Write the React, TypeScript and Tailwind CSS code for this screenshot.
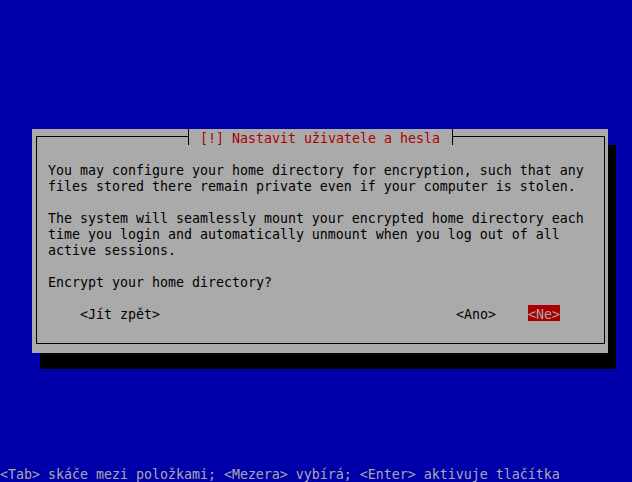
export default function App() {
  const lines = [
    "You may configure your home directory for encryption, such that any",
    "files stored there remain private even if your computer is stolen.",
    "",
    "The system will seamlessly mount your encrypted home directory each",
    "time you login and automatically unmount when you log out of all",
    "active sessions.",
    "",
    "Encrypt your home directory?",
    "",
  ];

  return (
    <div className="flex h-[482px] w-[632px] flex-col bg-[#0000aa] font-['DejaVu_Sans_Mono',monospace] text-[13.29px] leading-[19px]">
      {/* dialog */}
      <div className="relative ml-[32px] mt-[129px] flex h-[224px] w-[576px] flex-col bg-[#aaaaaa] pb-[9px] pl-[4px] pr-[3px] pt-[7px] shadow-[8px_16px_0_0_#000]">
        <div className="flex flex-1 flex-col border border-black pl-[11px] pt-[24px] text-black">
          {lines.map((l, i) => (
            <div key={i} className="h-4 whitespace-pre">
              {l}
            </div>
          ))}
          <div className="flex h-4 flex-row whitespace-pre">
            <span className="ml-[32px] h-4">&lt;Jít zpět&gt;</span>
            <span className="ml-[296px] h-4">&lt;Ano&gt;</span>
            <span className="ml-[32px] h-4 bg-[#aa0000] text-[#aaaaaa]">&lt;Ne&gt;</span>
          </div>
        </div>

        <div className="absolute left-[156px] top-0 h-4 overflow-visible whitespace-pre border-x border-black bg-[#aaaaaa] pl-[11px] pr-[12px] text-[#aa0000]">
          [!] Nastavit uživatele a hesla
        </div>
      </div>

      {/* help line */}
      <div className="mb-px mt-auto h-4 whitespace-pre text-[#aaaaaa]">
        &lt;Tab&gt; skáče mezi položkami; &lt;Mezera&gt; vybírá; &lt;Enter&gt; aktivuje tlačítka
      </div>
    </div>
  );
}
